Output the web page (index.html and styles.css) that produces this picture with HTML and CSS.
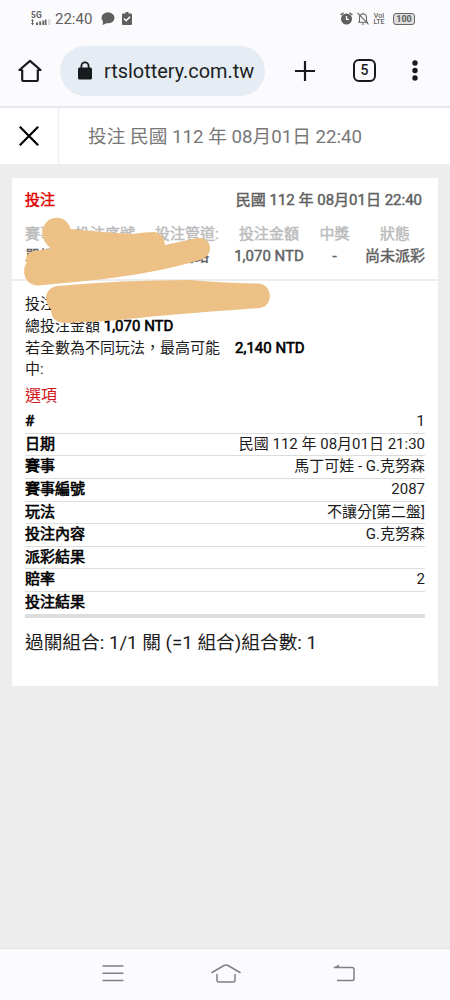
FILE: index.html
```html
<!DOCTYPE html>
<html lang="zh-Hant">
  <head>
    <meta charset="UTF-8" />
    <meta name="viewport" content="width=device-width, initial-scale=1.0" />
    <title>投注 民國 112 年 08月01日 22:40</title>
    <link rel="stylesheet" href="styles.css">
  </head>
  <body>
    <div class="status-bar">
      <div class="status-left">
        <div class="signal">
          <span>5G</span>
          <svg width="20" height="7" viewBox="0 0 20 7" fill="#666">
            <path d="M0 2l1.5-2L3 2zM1 2h1v2H1zM0 4h3L1.500 6.500z" />
            <path d="M5 3.500h2V6H5zM8.200 2.500h2V6h-2zM11.400 1.500h2V6h-2zM14 .5h1.500V6H14z" />
            <path d="M17 0h2.500v6H17z" fill="#ddd" />
          </svg>
        </div>
        <span class="clock">22:40</span>
        <svg class="chat-icon" width="14" height="13" viewBox="0 0 14 13" fill="#5f5f5f">
          <ellipse cx="7" cy="5.800" rx="6.500" ry="5.500" />
          <path d="M2 9l-.3 4 4.300-2z" />
        </svg>
        <svg class="task-icon" width="10" height="13" viewBox="0 0 10 13">
          <path d="M1 1.500h2.500V0h3v1.500H9q1 0 1 1V12q0 1-1 1H1q-1 0-1-1V2.500q0-1 1-1z" fill="#5f5f5f" />
          <path d="M2 6.500l2.200 2.200L8 4.700" fill="none" stroke="#fff" stroke-width="1.500" />
        </svg>
      </div>
      <div class="status-right">
        <svg width="13" height="13" viewBox="0 0 13 13">
          <path d="M.6 3L3.500.8M12.400 3L9.500.8" stroke="#5f5f5f" stroke-width="1.500" />
          <circle cx="6.500" cy="7" r="5.500" fill="#5f5f5f" />
          <path d="M6.500 4v3.300H9" fill="none" stroke="#fff" stroke-width="1.300" />
        </svg>
        <svg width="12" height="13" viewBox="0 0 12 13" fill="none" stroke="#666" stroke-width="1.100">
          <path d="M1 10.300h10M2.500 10V5.500Q2.500 2 6 2t3.500 3.500V10M6 .7V2M4.800 12h2.400" />
          <path d="M.5.800l11 11.500" />
        </svg>
        <div class="volte"><span>VoI</span><span>LTE</span></div>
        <div class="battery">100</div>
      </div>
    </div>

    <div class="browser-bar">
      <svg class="home-icon" width="24" height="24" viewBox="0 0 24 24" fill="none" stroke="#161a1d" stroke-width="2.200">
        <path d="M4.200 11H1.500L12 1.800 22.500 11h-2.700M4.200 10.500V21q0 1 1 1h13.600q1 0 1-1V10.500" stroke-linejoin="round" />
      </svg>
      <div class="address">
        <svg width="14" height="19" viewBox="0 0 14 19">
          <path d="M3.400 8V5a3.600 3.600 0 0 1 7.200 0v3" fill="none" stroke="#161a1d" stroke-width="1.800" />
          <rect x="0" y="6.500" width="14" height="12" rx="1.500" fill="#161a1d" />
        </svg>
        <span>rtslottery.com.tw</span>
      </div>
      <svg class="plus-icon" width="20" height="20" viewBox="0 0 20 20" stroke="#161a1d" stroke-width="2.200">
        <path d="M10 0v20M0 10h20" />
      </svg>
      <div class="tabs">5</div>
      <svg class="more-icon" width="6" height="21" viewBox="0 0 6 21" fill="#161a1d">
        <circle cx="3" cy="3" r="2.700" />
        <circle cx="3" cy="10.500" r="2.700" />
        <circle cx="3" cy="18" r="2.700" />
      </svg>
    </div>

    <div class="page-header">
      <div class="close">
        <svg width="20" height="20" viewBox="0 0 20 20" stroke="#000" stroke-width="2.200">
          <path d="M.8.800l18.400 18.400M19.200.8L.8 19.200" />
        </svg>
      </div>
      <h1>投注 民國 112 年 08月01日 22:40</h1>
    </div>

    <div class="content">
      <div class="card">
        <div class="summary">
          <div class="summary-top">
            <span class="red">投注</span>
            <span>民國 112 年 08月01日 22:40</span>
          </div>
          <div class="summary-grid">
            <div class="left"><span class="head">賽事</span><span>單場</span></div>
            <div class="left"><span class="head">投注序號</span><span></span></div>
            <div class="left"><span class="head">投注管道:</span><span class="channel">網路</span></div>
            <div><span class="head">投注金額</span><span>1,070 NTD</span></div>
            <div><span class="head">中獎</span><span>-</span></div>
            <div><span class="head">狀態</span><span>尚未派彩</span></div>
          </div>
        </div>

        <div class="details">
          <p>投注</p>
          <p>總投注金額 <b>1,070 NTD</b></p>
          <div class="max-win">
            <span>若全數為不同玩法，最高可能中:</span>
            <b>2,140 NTD</b>
          </div>
          <h2>選項</h2>
          <div class="rows">
            <div class="row"><b>#</b><span>1</span></div>
            <div class="row"><b>日期</b><span>民國 112 年 08月01日 21:30</span></div>
            <div class="row"><b>賽事</b><span>馬丁可娃 - G.克努森</span></div>
            <div class="row"><b>賽事編號</b><span>2087</span></div>
            <div class="row"><b>玩法</b><span>不讓分[第二盤]</span></div>
            <div class="row"><b>投注內容</b><span>G.克努森</span></div>
            <div class="row"><b>派彩結果</b><span></span></div>
            <div class="row"><b>賠率</b><span>2</span></div>
            <div class="row"><b>投注結果</b><span></span></div>
          </div>
          <div class="combo">過關組合: 1/1 關 (=1 組合)組合數: 1</div>
        </div>

        <!-- marker strokes over the private fields -->
        <svg class="marker" width="260" height="110" viewBox="20 215 260 110" fill="#edc085">
          <path d="M42.500 233C43 214 67 213 70.500 229Q100 232 133 234Q145 232 155 232Q165 235 165 245L195 238.500C213 235 215 256 200 260Q150 275 80 281.500L38 285.500C23 285 22 269 26.500 263C25 255 29 251 38 250.500L51 248.500Q42.500 242 42.500 233z" />
          <path d="M57 286Q120 280 190 280Q220 283 258 283.500C273 284 274 306 260 308Q160 315 115 320.500L66 323Q51 323 51 309C44 303 43 289 57 286z" />
        </svg>
      </div>
    </div>

    <div class="nav-bar">
      <svg width="22" height="18" viewBox="0 0 22 18" stroke="#808084" stroke-width="1.500">
        <path d="M.5 2h21M.5 9.200h21M.5 16.500h21" />
      </svg>
      <svg class="nav-home" width="30" height="20" viewBox="0 0 30 20" fill="none" stroke="#808084" stroke-width="1.500" stroke-linecap="round" stroke-linejoin="round">
        <path d="M1 9.500L13 2.500Q15 1.500 17 2.500L29 9.500M6 11.500V17q0 2 2 2h14q2 0 2-2v-5.500" />
      </svg>
      <svg width="22" height="18" viewBox="0 0 22 18" fill="none" stroke="#808084" stroke-width="1.500">
        <path d="M1 3.500h18q2 0 2 2V15q0 1.500-2 1.500H4" />
        <path d="M0 4l6-3.500V4z" fill="#808084" stroke="none" />
      </svg>
    </div>
  </body>
</html>
```

FILE: styles.css
```css
* {
  margin: 0;
  padding: 0;
  box-sizing: border-box;
}

body {
  width: 450px;
  height: 1000px;
  display: flex;
  flex-direction: column;
  overflow: hidden;
  background-color: #ededed;
  color: #1c1c1c;
  font-family: Roboto, "Noto Sans CJK TC", sans-serif;
  font-size: 15px;
}

svg {
  display: block;
  flex: none;
}

b {
  color: #000;
  font-weight: 400;
  -webkit-text-stroke: 0.6px #000;
}

/* status bar */
.status-bar {
  height: 37px;
  flex: none;
  display: flex;
  justify-content: space-between;
  padding: 0 35px 0 31px;
  background-color: #fbfbfd;
  color: #606060;
}

.status-left,
.status-right {
  display: flex;
  align-items: center;
}

.signal {
  width: 20px;
  margin-right: 4px;
  font-size: 8.5px;
  line-height: 7px;
  font-weight: 700;
}

.signal span {
  display: block;
}

.clock {
  width: 46px;
  font-size: 15px;
}

.task-icon {
  margin-left: 7px;
}

.status-right {
  gap: 4px;
}

.volte {
  width: 12px;
  margin-right: 4px;
  font-size: 7px;
  line-height: 6px;
  text-align: center;
  font-weight: 500;
}

.volte span {
  display: block;
}

.battery {
  width: 22px;
  height: 12px;
  border: 1px solid #666;
  border-radius: 3px;
  background-color: #ddd;
  font-size: 9px;
  line-height: 10px;
  font-weight: 700;
  text-align: center;
}

/* browser toolbar */
.browser-bar {
  height: 71px;
  flex: none;
  display: flex;
  align-items: center;
  padding: 0 32px 2px 18px;
  border-bottom: 2px solid #e6eaee;
  background-color: #fbfbfd;
}

.address {
  width: 205px;
  height: 50px;
  display: flex;
  align-items: center;
  gap: 12px;
  margin-left: 18px;
  padding-left: 18px;
  border-radius: 25px;
  background-color: #e6ecf3;
  color: #1b1f23;
  font-size: 19.9px;
}

.address span {
  padding-top: 2px;
}

.plus-icon {
  margin-left: 30px;
}

.tabs {
  width: 23px;
  height: 23px;
  margin-left: 38px;
  border: 2.2px solid #161a1d;
  border-radius: 6px;
  font-size: 14px;
  line-height: 19px;
  font-weight: 500;
  text-align: center;
}

.more-icon {
  margin-left: 36px;
}

/* page header */
.page-header {
  height: 56px;
  flex: none;
  display: flex;
  align-items: center;
  background-color: #fff;
}

.close {
  width: 59px;
  height: 100%;
  display: flex;
  align-items: center;
  justify-content: center;
  border-right: 1px solid #eee;
}

h1 {
  padding: 0 0 4px 29px;
  color: #777;
  font-size: 18.7px;
  font-weight: 400;
}

.content {
  flex: 1;
  padding: 14px 12px 0;
}

.card {
  position: relative;
  height: 508px;
  background-color: #fff;
}

.summary {
  height: 103px;
  padding: 11px 13px 0;
  border-bottom: 2px solid #ededed;
  color: #606060;
  -webkit-text-stroke: 0.45px;
}

.summary-top {
  display: flex;
  justify-content: space-between;
  padding-right: 3px;
  line-height: 22px;
}

.red {
  color: #e00000;
}

.summary-grid {
  display: grid;
  grid-template-columns: 50px 80px 79px 70px 61px 60px;
  padding-top: 11.5px;
  text-align: center;
  line-height: 22px;
  white-space: nowrap;
}

.summary-grid span {
  display: block;
}

.summary-grid .left {
  text-align: left;
}

.channel {
  padding-left: 24px;
}

.head {
  color: #bcbcbc;
}

.details {
  padding: 13px 13px 0;
  line-height: 21.8px;
}

.max-win {
  display: flex;
}

.max-win span {
  width: 210px;
  padding-right: 10px;
}

h2 {
  margin-top: 2px;
  color: #d0161b;
  font-size: 16px;
  font-weight: 400;
  line-height: 25px;
}

.rows {
  margin-top: 2.8px;
  border-bottom: 3px solid #ddd;
}

.row {
  height: 22.650px;
  display: flex;
  justify-content: space-between;
  border-bottom: 1px solid #dcdcdc;
}

.combo {
  margin-top: 12px;
  font-size: 18.700px;
  line-height: 27px;
}

.marker {
  position: absolute;
  top: 37px;
  left: 8px;
}

/* system navigation */
.nav-bar {
  height: 52px;
  flex: none;
  display: flex;
  align-items: center;
  padding: 0 0 3px 102px;
  border-top: 1px solid #e2e5e8;
  background-color: #fbfbfd;
}

.nav-home {
  margin: 0 92px 0 87px;
}
```
